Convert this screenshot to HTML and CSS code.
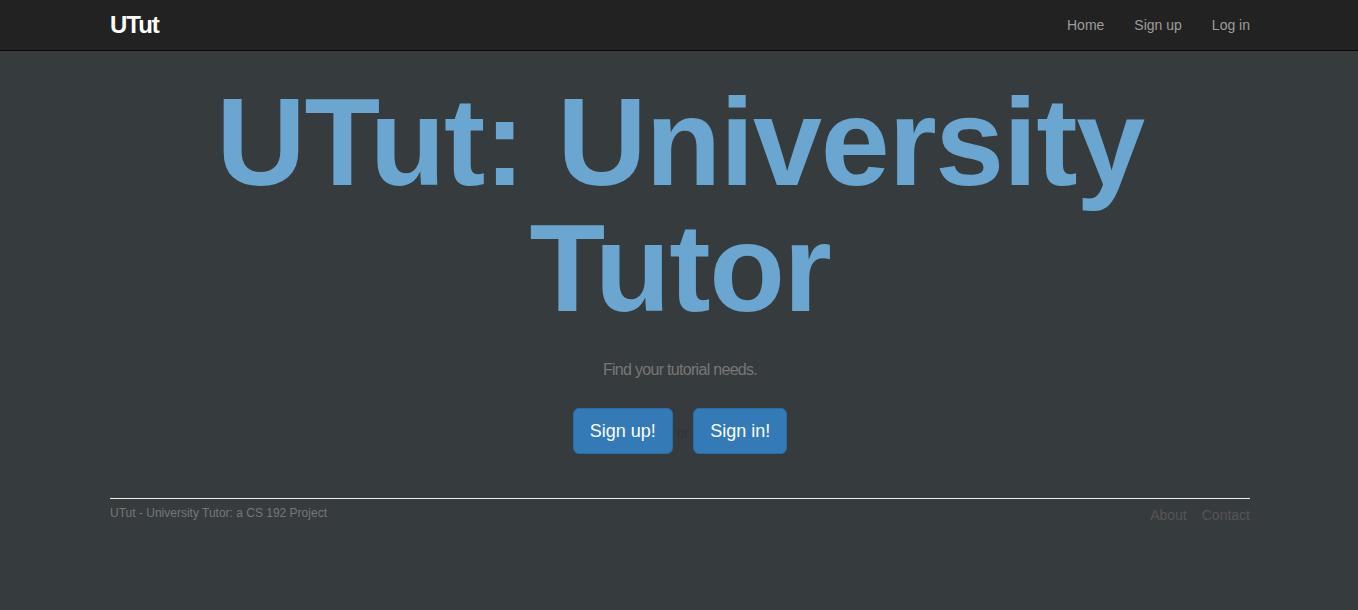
FILE: index.html
```html
<!DOCTYPE html>
<html>
<head>
<meta charset="utf-8">
<link rel="stylesheet" href="styles.css">
</head>
<body>
<nav class="navbar">
  <div class="container nav-inner">
    <a class="brand">UTut</a>
    <ul class="nav-links">
      <li><a>Home</a></li>
      <li><a>Sign up</a></li>
      <li><a>Log in</a></li>
    </ul>
  </div>
</nav>
<main class="container hero">
  <h1 class="title">UTut: University Tutor</h1>
  <p class="lead">Find your tutorial needs.</p>
  <div class="actions">
    <a class="btn">Sign up!</a>
    <span class="or">or</span>
    <a class="btn">Sign in!</a>
  </div>
</main>
<footer class="container footer">
  <div class="footer-row">
    <p class="credit">UTut - University Tutor: a CS 192 Project</p>
    <ul class="footer-links">
      <li><a>About</a></li>
      <li><a>Contact</a></li>
    </ul>
  </div>
</footer>
</body>
</html>
```
FILE: styles.css
```css
* { box-sizing: border-box; }
html, body { margin: 0; padding: 0; }
body {
  background: #363b3e;
  font-family: "Liberation Sans", Arial, sans-serif;
  font-size: 14px;
  color: #777;
}
.container {
  width: 1140px;
  margin: 0 auto;
  position: relative;
  left: 1px;
}
.navbar {
  background: #222;
  border-bottom: 1px solid #080808;
  height: 51px;
}
.nav-inner {
  display: flex;
  justify-content: space-between;
  align-items: center;
  height: 50px;
}
.brand {
  color: #fff;
  font-weight: bold;
  font-size: 24px;
  letter-spacing: -1px;
}
.nav-links {
  list-style: none;
  margin: 0;
  padding: 0;
  display: flex;
  gap: 30px;
}
.nav-links a {
  color: #9d9d9d;
  font-size: 14px;
}
.hero {
  text-align: center;
}
.title {
  margin: 28px 0 0;
  font-size: 124px;
  line-height: 126px;
  font-weight: bold;
  color: #6aa6cf;
  letter-spacing: -1.3px;
}
.lead {
  margin: 30px 0 0;
  font-size: 16px;
  letter-spacing: -0.7px;
  color: #777;
}
.actions {
  margin-top: 29px;
  display: flex;
  justify-content: center;
  align-items: center;
  gap: 4px;
}
.btn {
  display: inline-block;
  background: #337ab7;
  border: 1px solid #2e6da4;
  border-radius: 6px;
  color: #fff;
  font-size: 18px;
  line-height: 24px;
  padding: 10px 16px;
}
.or {
  color: #333;
  font-size: 14px;
  padding-top: 4px;
}
.footer {
  margin-top: 44px;
  border-top: 1px solid #eee;
}
.footer-row {
  display: flex;
  justify-content: space-between;
}
.credit {
  margin: 7px 0 0;
  font-size: 12px;
  color: #777;
}
.footer-links {
  list-style: none;
  margin: 8px 0 0;
  padding: 0;
  display: flex;
  gap: 15px;
}
.footer-links a {
  color: #555;
  font-size: 14px;
}
```
